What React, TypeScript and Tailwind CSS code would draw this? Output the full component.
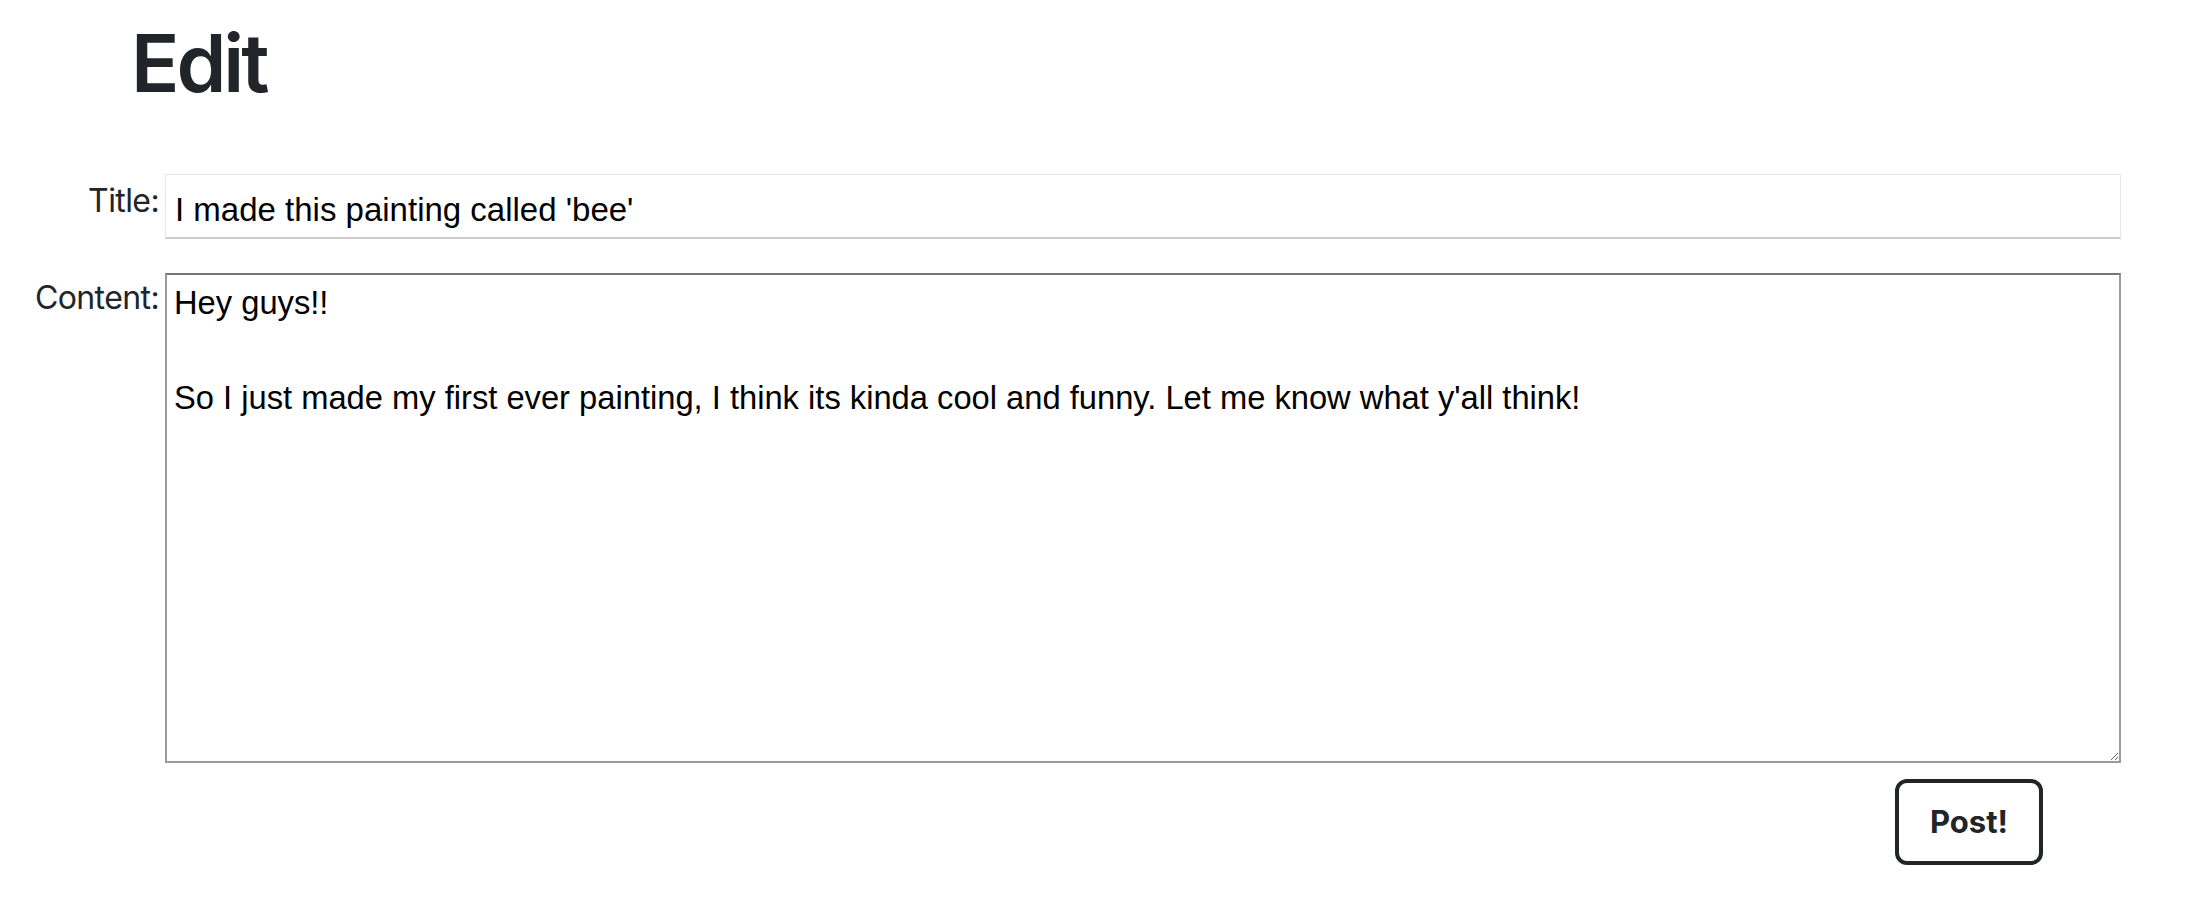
const CONTENT =
  "Hey guys!!\n\nSo I just made my first ever painting, I think its kinda cool and funny. Let me know what y'all think!";

export default function App() {
  return (
    <div className="min-h-screen w-full bg-white text-[#212529] font-['Inter','Liberation_Sans',sans-serif]">
      <h1 className="pl-[131px] pt-[23px] text-[80px] font-semibold leading-none tracking-[-3px]">Edit</h1>

      <form
        className="mt-[71px] grid grid-cols-[159px_1fr] gap-x-[6px] pr-[67px]"
        onSubmit={(e) => e.preventDefault()}
      >
        <label
          htmlFor="title"
          className="mt-[3px] text-right text-[32px] leading-[48px] tracking-[-0.6px]"
        >
          Title:
        </label>
        <input
          id="title"
          type="text"
          defaultValue="I made this painting called 'bee'"
          className="h-[65px] w-full border border-[#e8e8e8] border-b-2 border-b-[#cdcdcd] bg-white pl-[9px] pr-2 pt-[16px] pb-[8px] font-['Liberation_Sans',sans-serif] text-[33px] leading-[38px] text-black outline-none"
        />

        <label
          htmlFor="content"
          className="mt-[34px] pt-[1px] text-right text-[32px] leading-[48px] tracking-[-0.6px]"
        >
          Content:
        </label>
        <textarea
          id="content"
          defaultValue={CONTENT}
          className="mt-[34px] h-[490px] w-full resize border-2 border-[#9a9a9a] border-t-[#767676] bg-white px-[7px] pt-[4px] font-['Liberation_Sans',sans-serif] text-[32.7px] leading-[47.5px] text-black outline-none"
        />

        <div />
        <div className="mt-[16px] flex justify-end pr-[78px]">
          <button
            type="submit"
            className="h-[86px] w-[148px] rounded-[12px] border-[4px] border-[#212529] bg-white text-[31px] font-bold text-[#212529]"
          >
            Post!
          </button>
        </div>
      </form>
    </div>
  );
}
